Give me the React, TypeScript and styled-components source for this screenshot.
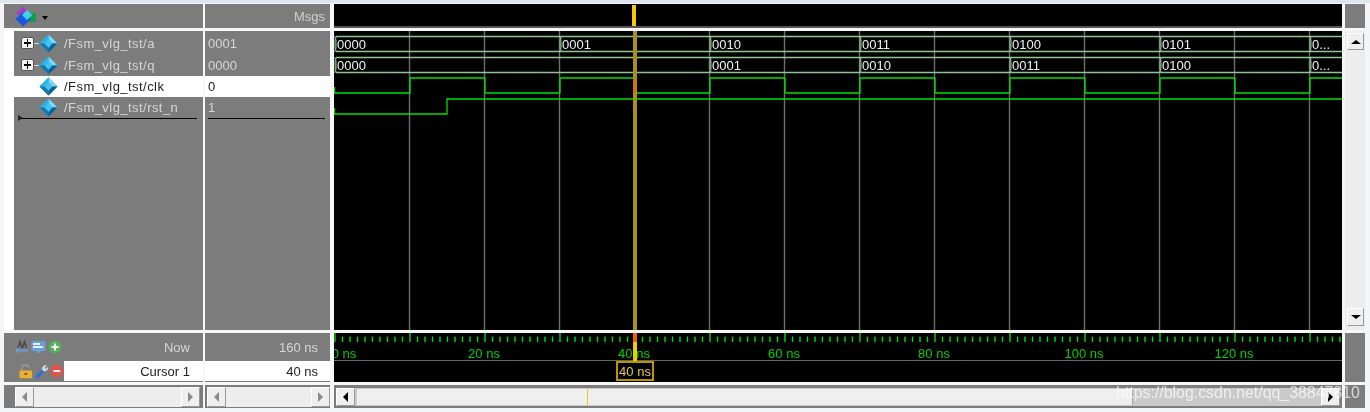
import React from 'react';
import styled, { createGlobalStyle } from 'styled-components';

const GlobalStyle = createGlobalStyle`
  html, body {
    margin: 0;
    padding: 0;
    background: #f4f5f6;
    overflow: hidden;
  }
`;

const GRAY = '#7c7c7c';
const SANS = '"Liberation Sans", Arial, sans-serif';

// main window
const Shell = styled.div`
  position: relative;
  width: 1370px;
  height: 412px;
  box-sizing: border-box;
  padding: 4px 0 0 4px;
  background: linear-gradient(#dfe5ec 3px, #f4f5f6 3px);
  font-family: ${SANS};
  font-size: 13px;
  filter: blur(0.35px);
  overflow: hidden;
`;

const Pane = styled.div`
  display: grid;
  grid-template-columns: 199px 127px 1008px 21px;
  grid-template-rows: 24px 299px 49px 23px;
  column-gap: 2px;
  row-gap: 3px;
  width: 1361px;
  background: #f7f7f7;
`;

const NameHeader = styled.div`
  display: flex;
  align-items: center;
  padding-left: 11px;
  gap: 5px;
  background: ${GRAY};
`;

const MsgsHeader = styled.div`
  display: flex;
  justify-content: flex-end;
  align-items: center;
  padding-right: 5px;
  background: ${GRAY};
  border-right: 2px solid #f7f7f7;
  color: #cfcfcf;
`;

const WaveHeader = styled.div`
  position: relative;
  background: #000;
  border-bottom: 2px solid #555;
`;

const CursorFlag = styled.div`
  position: absolute;
  left: 298px;
  top: 1px;
  bottom: 0;
  width: 4px;
  background: #f5c800;
`;

const SideCap = styled.div`
  margin-left: 1px;
  background: ${GRAY};
`;

const Caret = styled.div`
  width: 0;
  height: 0;
  border-left: 3px solid transparent;
  border-right: 3px solid transparent;
  border-top: 4px solid #000;
  margin-top: 3px;
`;

const NameColumn = styled.div`
  display: flex;
  flex-direction: column;
  box-sizing: border-box;
  padding: 1px 0 0 10px;
  background: linear-gradient(90deg, #fff 10px, ${GRAY} 10px);
`;

const MsgColumn = styled.div`
  display: flex;
  flex-direction: column;
  box-sizing: border-box;
  padding-top: 1px;
  background: ${GRAY};
  border-right: 2px solid #f7f7f7;
`;

const SignalRow = styled.div<{ $selected?: boolean; $h: number }>`
  display: flex;
  align-items: center;
  height: ${(p) => p.$h}px;
  flex: none;
  background: ${(p) => (p.$selected ? '#fff' : GRAY)};
  color: ${(p) => (p.$selected ? '#222' : '#d6d6d6')};
`;

const Expander = styled.div`
  position: relative;
  flex: none;
  width: 11px;
  height: 10px;
  margin-left: 7px;
  border: 1px solid #555;
  border-radius: 2px;
  background: #f4f4f4;
  &::before {
    content: '';
    position: absolute;
    left: 2px;
    top: 4px;
    width: 7px;
    height: 2px;
    background: #000;
  }
  &::after {
    content: '';
    position: absolute;
    left: 5px;
    top: 1px;
    width: 1px;
    height: 8px;
    background: #000;
  }
`;

const Connector = styled.div`
  flex: none;
  width: 5px;
  height: 1px;
  background: #d8d8d8;
`;

const ExpanderSpace = styled.div`
  flex: none;
  width: 25px;
`;

const SignalName = styled.span`
  margin-left: 6px;
  letter-spacing: 0.45px;
  white-space: nowrap;
`;

const SignalValue = styled.span`
  margin-left: 3px;
`;

const RowDivider = styled.div<{ $inset: number; $end: number }>`
  position: relative;
  height: 1px;
  margin: 0 ${(p) => p.$end}px 0 ${(p) => p.$inset}px;
  background: #000;
`;

const DividerTip = styled.div`
  position: absolute;
  left: -2px;
  top: -3px;
  width: 0;
  height: 0;
  border-top: 3px solid transparent;
  border-bottom: 3px solid transparent;
  border-left: 5px solid #222;
`;

const WaveArea = styled.div`
  background: #000;
  line-height: 0;
`;

const WaveSvg = styled.svg`
  display: block;
  font-family: ${SANS};
  font-size: 13px;
`;

const SideScroll = styled.div`
  display: flex;
  flex-direction: column;
  margin-left: 1px;
  padding: 2px 1px 4px 2px;
  background: #ededed;
`;

const VerticalTrack = styled.div`
  flex: 1;
  background: #ededed;
`;

const StatusNames = styled.div`
  display: flex;
  flex-direction: column;
  background: ${GRAY};
`;

const StatusLine = styled.div<{ $white?: boolean }>`
  display: flex;
  align-items: center;
  height: ${(p) => (p.$white ? 20 : 28)}px;
  flex: none;
`;

const IconSet = styled.div<{ $pad: number; $w: number }>`
  display: flex;
  align-items: center;
  flex: none;
  gap: 2px;
  box-sizing: border-box;
  width: ${(p) => p.$w}px;
  padding-left: ${(p) => p.$pad}px;
`;

const NowLabel = styled.div`
  flex: 1;
  text-align: right;
  padding-right: 13px;
  color: #d6d6d6;
`;

const CursorField = styled.div`
  flex: 1;
  align-self: stretch;
  display: flex;
  align-items: center;
  justify-content: flex-end;
  padding-right: 13px;
  background: #fff;
  color: #222;
`;

const StatusValues = styled.div`
  display: flex;
  flex-direction: column;
  background: ${GRAY};
  border-right: 2px solid #f7f7f7;
`;

const NowValue = styled.div`
  display: flex;
  align-items: center;
  justify-content: flex-end;
  height: 28px;
  padding-right: 12px;
  color: #d6d6d6;
`;

const CursorValue = styled.div`
  display: flex;
  align-items: center;
  justify-content: flex-end;
  height: 20px;
  padding-right: 12px;
  background: #fff;
  color: #222;
`;

const Timeline = styled.div`
  position: relative;
  background: #000;
  line-height: 0;
`;

const CursorTag = styled.div`
  position: absolute;
  left: 282px;
  top: 28px;
  box-sizing: border-box;
  width: 38px;
  height: 20px;
  display: flex;
  align-items: center;
  justify-content: center;
  border: 2px solid #b89600;
  color: #e6c84a;
  font-size: 13px;
  line-height: 1;
  white-space: nowrap;
`;

const BottomBar = styled.div<{ $pad: string; $border?: boolean }>`
  display: flex;
  align-items: center;
  padding: ${(p) => p.$pad};
  background: ${GRAY};
  border-right: ${(p) => (p.$border ? '2px solid #f7f7f7' : 'none')};
`;

const ScrollButton = styled.div<{ $w?: number; $h?: number }>`
  display: flex;
  align-items: center;
  justify-content: center;
  flex: none;
  box-sizing: border-box;
  width: ${(p) => p.$w ?? 19}px;
  height: ${(p) => p.$h ?? 20}px;
  background: #efefef;
  border: 1px solid;
  border-color: #fff #9a9a9a #9a9a9a #fff;
`;

const Arrow = styled.div<{ $dir: 'left' | 'right' | 'up' | 'down'; $dark?: boolean }>`
  width: 0;
  height: 0;
  ${(p) => {
    const c = p.$dark ? '#000' : '#8a8a8a';
    if (p.$dir === 'left') return `border-top:5px solid transparent;border-bottom:5px solid transparent;border-right:5px solid ${c};`;
    if (p.$dir === 'right') return `border-top:5px solid transparent;border-bottom:5px solid transparent;border-left:5px solid ${c};`;
    if (p.$dir === 'up') return `border-left:5px solid transparent;border-right:5px solid transparent;border-bottom:4px solid ${c};`;
    return `border-left:5px solid transparent;border-right:5px solid transparent;border-top:4px solid ${c};`;
  }}
`;

const ScrollTrack = styled.div`
  flex: 1;
  height: 20px;
  background: #ededed;
`;

const WaveScroll = styled.div`
  position: relative;
  display: flex;
  align-items: center;
  width: 100%;
  height: 18px;
  background: #c9c9c9;
`;

const WaveThumb = styled.div`
  flex: none;
  width: 775px;
  height: 16px;
  margin-left: 2px;
  background: #efefef;
  border-right: 1px solid #a8a8a8;
`;

const WaveSpacer = styled.div`
  flex: 1;
`;

const CursorMark = styled.div`
  position: absolute;
  left: 251px;
  top: 1px;
  width: 1px;
  height: 16px;
  background: #f2c21a;
`;

const Watermark = styled.div`
  position: absolute;
  left: 1116px;
  top: 382px;
  font-family: ${SANS};
  font-size: 15.9px;
  line-height: 21px;
  color: rgba(255, 255, 255, 0.7);
  white-space: nowrap;
  pointer-events: none;
`;

// drawn icons
const Diamond = () => (
  <svg width="19" height="19" viewBox="0 0 19 19">
    <path d="M9.5 0.5 18.5 9.5 9.5 18.5 0.5 9.5Z" fill="#1f9fd6" />
    <path d="M9.5 0.5 18.5 9.5 13.5 9.5 9.5 5Z" fill="#7fd8f4" />
    <path d="M9.5 0.5 0.5 9.5 5.5 9.5 9.5 5Z" fill="#2cb4e8" />
    <path d="M5.5 9.5 9.5 5 13.5 9.5 9.5 14Z" fill="#43c3ee" />
    <path d="M0.5 9.5 9.5 18.5 9.5 14 5.5 9.5Z" fill="#1777ad" />
    <path d="M18.5 9.5 9.5 18.5 9.5 14 13.5 9.5Z" fill="#0f5f93" />
  </svg>
);

const LayersIcon = () => (
  <svg width="22" height="21" viewBox="0 0 22 21">
    <path d="M8 0.5 15 7 8 13 1.5 7Z" fill="#a83bc0" />
    <rect x="11" y="7" width="10" height="9" fill="#159a4a" />
    <path d="M8 6 16 13 8 20.5 0.5 13Z" fill="#1857e0" />
    <path d="M12 4 17.5 9 12 14 7 9Z" fill="#3fd0e8" />
  </svg>
);

const SnapIcon = () => (
  <svg width="14" height="14" viewBox="0 0 14 14">
    <path d="M3 8 5 1.5 7 8M7.5 8 9.5 1.5 11.5 8" stroke="#4a4a4a" strokeWidth="1.5" fill="none" />
    <path d="M1 10.5H13" stroke="#6f9fd8" strokeWidth="2" />
    <path d="M1 10.5 4 8M1 10.5 4 13" stroke="#6f9fd8" strokeWidth="1.2" fill="none" />
  </svg>
);

const ScreenIcon = () => (
  <svg width="15" height="15" viewBox="0 0 15 15">
    <rect x="0.5" y="1" width="14" height="10" rx="1" fill="#6a9ed8" />
    <rect x="2" y="3" width="7" height="2" fill="#e4eefa" />
    <rect x="2" y="6" width="10" height="2" fill="#e4eefa" />
    <path d="M5 11 H10 L7.5 14Z" fill="#6a9ed8" />
  </svg>
);

const RoundIcon = ({ color, plus }: { color: string; plus?: boolean }) => (
  <svg width="14" height="14" viewBox="0 0 14 14">
    <circle cx="7" cy="7" r="6.5" fill={color} />
    <rect x="3.5" y="6" width="7" height="2" fill="#f4f4f4" />
    {plus && <rect x="6" y="3.5" width="2" height="7" fill="#f4f4f4" />}
  </svg>
);

const LockIcon = () => (
  <svg width="14" height="15" viewBox="0 0 14 15">
    <path d="M3 7V3.5C3 1.5 4.5 0.8 6.5 0.8S10 1.5 10 3.5" stroke="#9a9a9a" strokeWidth="1.6" fill="none" />
    <rect x="0.5" y="6.5" width="13" height="8" rx="1" fill="#e8b030" />
    <rect x="5.5" y="9" width="3" height="2" fill="#8a5a10" />
  </svg>
);

const WrenchIcon = () => (
  <svg width="14" height="15" viewBox="0 0 14 15">
    <path d="M2 13 8.5 6.5" stroke="#2f6fe0" strokeWidth="3.4" strokeLinecap="round" />
    <path d="M8.2 6.8 A3.4 3.4 0 0 1 12 1.4 L10 3.8 11 5 13.2 3 A3.4 3.4 0 0 1 8.2 6.8Z" fill="#cfdcf0" />
  </svg>
);

// wave data
const toX = (px: number) => px - 334;
const GRID = [410, 485, 560, 635, 710, 785, 860, 935, 1010, 1085, 1160, 1235, 1310];

const BUS_A: [number, string][] = [[335, '0000'], [560, '0001'], [710, '0010'], [860, '0011'], [1010, '0100'], [1160, '0101'], [1310, '0...']];
const BUS_Q: [number, string][] = [[335, '0000'], [710, '0001'], [860, '0010'], [1010, '0011'], [1160, '0100'], [1310, '0...']];

const clkPath = () => {
  const hi = 47;
  const lo = 62;
  let d = `M${toX(334.5)} 56V${lo}H${toX(410)}`;
  let level = lo;
  GRID.forEach((x, i) => {
    level = level === lo ? hi : lo;
    const next = GRID[i + 1] ?? 1342;
    d += `V${level}H${toX(next)}`;
  });
  return d;
};

const BusWave = ({ top, items }: { top: number; items: [number, string][] }) => {
  const bottom = top + 15;
  return (
    <g>
      <path d={`M${toX(336)} ${top + 0.5}H1008M${toX(336)} ${bottom + 0.5}H1008`} stroke="#8fc48f" strokeWidth="1.5" fill="none" />
      {items.map(([x, label]) => (
        <g key={x}>
          <path d={`M${toX(x) - 0.5} ${top}L${toX(x) + 1} ${top + 4}V${bottom - 3}L${toX(x) - 0.5} ${bottom + 1}M${toX(x) + 1.5} ${top}L${toX(x)} ${top + 4}V${bottom - 3}L${toX(x) + 1.5} ${bottom + 1}`} stroke="#8fc48f" fill="none" />
          <text x={toX(x) + 2} y={top + 12.5} fill="#eef2f6">{label}</text>
        </g>
      ))}
    </g>
  );
};

const TICKS = Array.from({ length: 135 }, (_, i) => i);
const LABELS = [0, 20, 40, 60, 80, 100, 120];

const VerticalScrollbar = () => (
  <SideScroll>
    <ScrollButton $w={17} $h={17}><Arrow $dir="up" $dark /></ScrollButton>
    <VerticalTrack />
    <ScrollButton $w={17} $h={18}><Arrow $dir="down" $dark /></ScrollButton>
  </SideScroll>
);

const App = () => (
  <Shell>
    <GlobalStyle />
    <Pane>
      <NameHeader>
        <LayersIcon />
        <Caret />
      </NameHeader>
      <MsgsHeader>Msgs</MsgsHeader>
      <WaveHeader><CursorFlag /></WaveHeader>
      <SideCap />

      <NameColumn>
        <SignalRow $h={22}>
          <Expander />
          <Connector />
          <Diamond />
          <SignalName>/Fsm_vlg_tst/a</SignalName>
        </SignalRow>
        <SignalRow $h={22}>
          <Expander />
          <Connector />
          <Diamond />
          <SignalName>/Fsm_vlg_tst/q</SignalName>
        </SignalRow>
        <SignalRow $h={21} $selected>
          <ExpanderSpace />
          <Diamond />
          <SignalName>/Fsm_vlg_tst/clk</SignalName>
        </SignalRow>
        <SignalRow $h={21}>
          <ExpanderSpace />
          <Diamond />
          <SignalName>/Fsm_vlg_tst/rst_n</SignalName>
        </SignalRow>
        <RowDivider $inset={6} $end={6}><DividerTip /></RowDivider>
      </NameColumn>

      <MsgColumn>
        <SignalRow $h={22}><SignalValue>0001</SignalValue></SignalRow>
        <SignalRow $h={22}><SignalValue>0000</SignalValue></SignalRow>
        <SignalRow $h={21} $selected><SignalValue>0</SignalValue></SignalRow>
        <SignalRow $h={21}><SignalValue>1</SignalValue></SignalRow>
        <RowDivider $inset={3} $end={5} />
      </MsgColumn>

      <WaveArea>
        <WaveSvg width="1008" height="299" viewBox="0 0 1008 299">
          {GRID.map((x) => (
            <line key={x} x1={toX(x) - 0.5} x2={toX(x) - 0.5} y1="0" y2="299" stroke="#6e6e6e" strokeWidth="1.4" />
          ))}
          <BusWave top={5} items={BUS_A} />
          <BusWave top={26} items={BUS_Q} />
          <path d={clkPath()} stroke="#00e000" strokeWidth="1.3" fill="none" />
          <path d={`M0.5 77V83H${toX(447)}V68H1008`} stroke="#00e000" strokeWidth="1.3" fill="none" />
          <rect x="299" y="0" width="4" height="299" fill="#a8901c" />
          <path d="M300.5 48V62" stroke="#f06000" strokeWidth="2" />
        </WaveSvg>
      </WaveArea>

      <VerticalScrollbar />

      <StatusNames>
        <StatusLine>
          <IconSet $pad={11} $w={60}>
            <SnapIcon />
            <ScreenIcon />
            <RoundIcon color="#54b05a" plus />
          </IconSet>
          <NowLabel>Now</NowLabel>
        </StatusLine>
        <StatusLine $white>
          <IconSet $pad={15} $w={60}>
            <LockIcon />
            <WrenchIcon />
            <RoundIcon color="#e0524a" />
          </IconSet>
          <CursorField>Cursor 1</CursorField>
        </StatusLine>
      </StatusNames>

      <StatusValues>
        <NowValue>160 ns</NowValue>
        <CursorValue>40 ns</CursorValue>
      </StatusValues>

      <Timeline>
        <WaveSvg width="1008" height="49" viewBox="0 0 1008 49">
          {TICKS.map((i) => {
            const x = toX(335) + i * 7.5;
            return (
              <line
                key={i}
                x1={x}
                x2={x}
                y1={i % 10 === 0 ? 0 : 3.5}
                y2="9"
                stroke="#00d800"
                strokeWidth="1.4"
              />
            );
          })}
          <line x1="0" x2="1008" y1="27.5" y2="27.5" stroke="#666" />
          <rect x="299" y="0" width="4" height="28" fill="#f5c800" />
          <rect x="299" y="0" width="4" height="9" fill="#f06000" />
          {LABELS.map((n) => (
            <text key={n} x={n === 0 ? 10 : toX(334) + n * 7.5} y="24.5" fill="#00d000" textAnchor="middle">
              {n} ns
            </text>
          ))}
        </WaveSvg>
        <CursorTag>40 ns</CursorTag>
      </Timeline>

      <SideCap />

      <BottomBar $pad="0 3px 0 11px">
        <ScrollButton><Arrow $dir="left" /></ScrollButton>
        <ScrollTrack />
        <ScrollButton><Arrow $dir="right" /></ScrollButton>
      </BottomBar>

      <BottomBar $pad="0 0 0 2px" $border>
        <ScrollButton><Arrow $dir="left" /></ScrollButton>
        <ScrollTrack />
        <ScrollButton><Arrow $dir="right" /></ScrollButton>
      </BottomBar>

      <BottomBar $pad="0 2px">
        <WaveScroll>
          <ScrollButton $h={18}><Arrow $dir="left" $dark /></ScrollButton>
          <WaveThumb />
          <WaveSpacer />
          <CursorMark />
          <ScrollButton $h={18}><Arrow $dir="right" $dark /></ScrollButton>
        </WaveScroll>
      </BottomBar>

      <SideCap />
    </Pane>
    <Watermark>https://blog.csdn.net/qq_38847810</Watermark>
  </Shell>
);

export default App;
